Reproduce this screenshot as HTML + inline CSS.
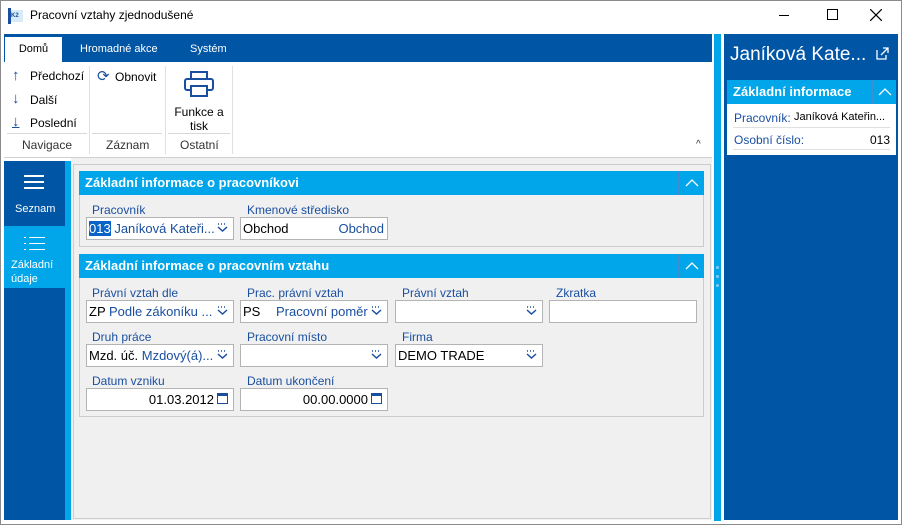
<!DOCTYPE html>
<html><head><meta charset="utf-8"><style>
*{box-sizing:border-box;margin:0;padding:0}
body{width:902px;height:525px;background:#fff;font-family:"Liberation Sans",sans-serif;font-size:12px;position:relative;overflow:hidden;color:#000}
.a{position:absolute}
.lbl{position:absolute;color:#1a4fa0;font-size:12px}
.inp{position:absolute;height:23px;background:#fff;border:1px solid #b4b4b4;font-size:13px;line-height:21px;padding-left:2px;white-space:nowrap;overflow:hidden}
.dd{position:absolute;right:5px;top:5px;width:11px;height:10px}
.sec{position:absolute;background:#00a6e9;color:#fff;font-weight:bold;font-size:13px;line-height:24px;padding-left:6px}
.up{position:absolute;right:0;top:0;width:26px;height:24px;border-left:1px solid #3f8fd0}
</style></head><body>
<div class="a" style="left:0;top:0;width:902px;height:525px;border:1px solid #8a8a8a"></div>
<!-- title -->
<div class="a" style="left:8px;top:8px;width:3px;height:16px;background:#1a4fa0"></div>
<div class="a" style="left:11px;top:10px;width:12px;height:12px;background:#d8ecf8;font-size:6px;font-weight:bold;color:#1a4fa0;line-height:12px">K2</div>
<div class="a" style="left:30px;top:8px;font-size:12px">Pracovní vztahy zjednodušené</div>
<div class="a" style="left:779px;top:15px;width:10px;height:1px;background:#000"></div>
<div class="a" style="left:827px;top:9px;width:11px;height:11px;border:1px solid #000"></div>
<svg class="a" style="left:870px;top:9px" width="12" height="12"><path d="M0 0L12 12M12 0L0 12" stroke="#000" stroke-width="1.2"/></svg>
<!-- ribbon -->
<div class="a" style="left:4px;top:34px;width:708px;height:28px;background:#0055a5"></div>
<div class="a" style="left:5px;top:37px;width:57px;height:25px;background:#fff;text-align:center;line-height:25px;font-size:11px;color:#000">Domů</div>
<div class="a" style="left:80px;top:43px;font-size:11px;color:#fff">Hromadné akce</div>
<div class="a" style="left:190px;top:43px;font-size:11px;color:#fff">Systém</div>
<div class="a" style="left:4px;top:62px;width:708px;height:96px;background:#fff;border-bottom:1px solid #d0d0d0"></div>
<div class="a" style="left:12px;top:67px;color:#1a4fa0;font-size:15px">↑</div><div class="a" style="left:30px;top:69px">Předchozí</div>
<div class="a" style="left:12px;top:90px;color:#1a4fa0;font-size:15px">↓</div><div class="a" style="left:30px;top:93px">Další</div>
<div class="a" style="left:12px;top:113px;color:#1a4fa0;font-size:15px;text-decoration:underline">↓</div><div class="a" style="left:30px;top:116px">Poslední</div>
<div class="a" style="left:97px;top:67px;color:#1a4fa0;font-size:15px">⟳</div><div class="a" style="left:115px;top:70px">Obnovit</div>
<svg class="a" style="left:184px;top:71px" width="30" height="26" viewBox="0 0 30 26"><rect x="7" y="1" width="16" height="7" fill="none" stroke="#1a4fa0" stroke-width="2"/><rect x="1" y="8" width="28" height="11" rx="2" fill="none" stroke="#1a4fa0" stroke-width="2"/><rect x="7" y="15" width="16" height="10" fill="#fff" stroke="#1a4fa0" stroke-width="2"/></svg>
<div class="a" style="left:166px;top:105px;width:66px;text-align:center;line-height:14px">Funkce a<br>tisk</div>
<div class="a" style="left:7px;top:133px;width:80px;height:1px;background:#d8d8d8"></div>
<div class="a" style="left:92px;top:133px;width:70px;height:1px;background:#d8d8d8"></div>
<div class="a" style="left:168px;top:133px;width:62px;height:1px;background:#d8d8d8"></div>
<div class="a" style="left:89px;top:66px;width:1px;height:88px;background:#e0e0e0"></div>
<div class="a" style="left:165px;top:66px;width:1px;height:88px;background:#e0e0e0"></div>
<div class="a" style="left:232px;top:66px;width:1px;height:88px;background:#e0e0e0"></div>
<div class="a" style="left:22px;top:138px;color:#333">Navigace</div>
<div class="a" style="left:106px;top:138px;color:#333">Záznam</div>
<div class="a" style="left:180px;top:138px;color:#333">Ostatní</div>
<div class="a" style="left:696px;top:139px;font-size:10px;color:#333">^</div>
<!-- left nav -->
<div class="a" style="left:4px;top:161px;width:61px;height:359px;background:#0055a5"></div>
<div class="a" style="left:65px;top:161px;width:6px;height:359px;background:#00a6e9"></div>
<div class="a" style="left:4px;top:226px;width:61px;height:62px;background:#00a6e9"></div>
<div class="a" style="left:24px;top:175px;width:20px;height:2px;background:#fff;box-shadow:0 6px 0 #fff,0 12px 0 #fff"></div>
<div class="a" style="left:15px;top:203px;color:#fff;font-size:11px">Seznam</div>
<div class="a" style="left:29px;top:237px;width:16px;height:1px;background:#fff;box-shadow:0 6px 0 #fff,0 12px 0 #fff"></div>
<div class="a" style="left:24px;top:237px;width:2px;height:1px;background:#fff;box-shadow:0 6px 0 #fff,0 12px 0 #fff"></div>
<div class="a" style="left:11px;top:258px;color:#fff;font-size:11px;line-height:14px">Základní<br>údaje</div>
<!-- main -->
<div class="a" style="left:71px;top:158px;width:641px;height:362px;background:#f0f0f0"></div>
<div class="a" style="left:73px;top:164px;width:638px;height:355px;border:1px solid #ccc"></div>
<div class="a" style="left:79px;top:171px;width:625px;height:76px;border:1px solid #ccc"></div>
<div class="sec" style="left:79px;top:171px;width:625px;height:24px">Základní informace o pracovníkovi<div class="up"><svg width="26" height="24"><path d="M7 15 L13 9 L19 15" fill="none" stroke="#fff" stroke-width="1.3"/></svg></div></div>
<div class="a" style="left:79px;top:254px;width:625px;height:163px;border:1px solid #ccc"></div>
<div class="sec" style="left:79px;top:254px;width:625px;height:24px">Základní informace o pracovním vztahu<div class="up"><svg width="26" height="24"><path d="M7 15 L13 9 L19 15" fill="none" stroke="#fff" stroke-width="1.3"/></svg></div></div>
<svg width="0" height="0" style="position:absolute"><defs><symbol id="d" viewBox="0 0 11 10"><path d="M1 1h1M4 1h1M7 1h1M10 1h0M1 4 L5.5 8 L10 4" stroke="#1a4fa0" stroke-width="1.5" fill="none"/></symbol></defs></svg>

<div class="lbl" style="left:92px;top:203px">Pracovník</div>
<div class="inp" style="left:86px;top:217px;width:148px;color:#1a4fa0"><span style="background:#0a64c8;color:#fff">013</span> Janíková Kateři...<svg class="dd"><use href="#d"/></svg></div>
<div class="lbl" style="left:247px;top:203px">Kmenové středisko</div>
<div class="inp" style="left:240px;top:217px;width:148px">Obchod<span style="position:absolute;right:3px;color:#1a4fa0">Obchod</span></div>

<div class="lbl" style="left:92px;top:286px">Právní vztah dle</div>
<div class="inp" style="left:86px;top:300px;width:148px">ZP <span style="color:#1a4fa0">Podle zákoníku ...</span><svg class="dd"><use href="#d"/></svg></div>
<div class="lbl" style="left:247px;top:286px">Prac. právní vztah</div>
<div class="inp" style="left:240px;top:300px;width:148px">PS <span style="color:#1a4fa0;margin-left:12px">Pracovní poměr</span><svg class="dd"><use href="#d"/></svg></div>
<div class="lbl" style="left:402px;top:286px">Právní vztah</div>
<div class="inp" style="left:395px;top:300px;width:148px"><svg class="dd"><use href="#d"/></svg></div>
<div class="lbl" style="left:556px;top:286px">Zkratka</div>
<div class="inp" style="left:549px;top:300px;width:148px"></div>

<div class="lbl" style="left:92px;top:330px">Druh práce</div>
<div class="inp" style="left:86px;top:344px;width:148px">Mzd. úč. <span style="color:#1a4fa0">Mzdový(á)...</span><svg class="dd"><use href="#d"/></svg></div>
<div class="lbl" style="left:247px;top:330px">Pracovní místo</div>
<div class="inp" style="left:240px;top:344px;width:148px"><svg class="dd"><use href="#d"/></svg></div>
<div class="lbl" style="left:402px;top:330px">Firma</div>
<div class="inp" style="left:395px;top:344px;width:148px">DEMO TRADE<svg class="dd"><use href="#d"/></svg></div>

<div class="lbl" style="left:92px;top:374px">Datum vzniku</div>
<div class="inp" style="left:86px;top:388px;width:148px;text-align:right;padding-right:19px">01.03.2012</div>
<div class="a" style="left:217px;top:393px;width:11px;height:11px;border:1px solid #1a4fa0;border-top-width:3px"></div>
<div class="lbl" style="left:247px;top:374px">Datum ukončení</div>
<div class="inp" style="left:240px;top:388px;width:148px;text-align:right;padding-right:19px">00.00.0000</div>
<div class="a" style="left:371px;top:393px;width:11px;height:11px;border:1px solid #1a4fa0;border-top-width:3px"></div>

<!-- splitter -->
<div class="a" style="left:712px;top:34px;width:2px;height:487px;background:#fff"></div>
<div class="a" style="left:714px;top:34px;width:7px;height:487px;background:#00a6e9"></div>
<div class="a" style="left:716px;top:266px;width:3px;height:3px;background:#7cc8f0;box-shadow:0 9px 0 #7cc8f0,0 18px 0 #7cc8f0;border-radius:1px"></div>
<div class="a" style="left:721px;top:34px;width:3px;height:487px;background:#fff"></div>
<!-- right panel -->
<div class="a" style="left:724px;top:34px;width:174px;height:486px;background:#0055a5"></div>
<div class="a" style="left:730px;top:44px;color:#fff;font-size:19px">Janíková Kate...</div>
<svg class="a" style="left:876px;top:47px" width="13" height="13"><path d="M1 3v9h9V8M7 1h5v5M12 1L5 8" fill="none" stroke="#fff" stroke-width="1.3"/></svg>
<div class="sec" style="left:727px;top:80px;width:169px;height:24px;font-size:13px;line-height:24px">Základní informace<div class="up" style="width:24px"><svg width="24" height="24"><path d="M6 15 L12 9 L18 15" fill="none" stroke="#fff" stroke-width="1.3"/></svg></div></div>
<div class="a" style="left:727px;top:104px;width:169px;height:51px;background:#fff"></div>
<div class="a" style="left:734px;top:111px;color:#1a4fa0">Pracovník:</div>
<div class="a" style="left:794px;top:111px;font-size:11px">Janíková Kateřin...</div>
<div class="a" style="left:733px;top:127px;width:157px;height:1px;background:#e0e0e0"></div>
<div class="a" style="left:734px;top:133px;color:#1a4fa0">Osobní číslo:</div>
<div class="a" style="left:870px;top:133px">013</div>
<div class="a" style="left:733px;top:149px;width:157px;height:1px;background:#e0e0e0"></div>
</body></html>
